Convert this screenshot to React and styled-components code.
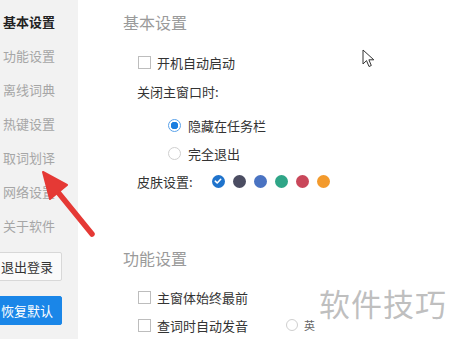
import React from "react";
import styled, { createGlobalStyle } from "styled-components";

const Global = createGlobalStyle`
  html, body {
    margin: 0;
    padding: 0;
    background: #ffffff;
    font-family: "Noto Sans CJK SC", "Noto Sans", sans-serif;
    overflow: hidden;
  }
`;

const menu = ["基本设置", "功能设置", "离线词典", "热键设置", "取词划译", "网络设置", "关于软件"];
const skins = ["#1f73cc", "#4b4d62", "#4a73c2", "#2fa587", "#c9475a", "#f39a2c"];

const Page = () => {
  return (
    <Window>
      <Global />
      <Sidebar>
        <Menu>
          {menu.map((m, i) => (
            <MenuItem key={m} active={i === 0}>{m}</MenuItem>
          ))}
        </Menu>
        <SideButton>退出登录</SideButton>
        <SideButton primary>恢复默认</SideButton>
      </Sidebar>
      <Content>
        <Heading>基本设置</Heading>
        <Row height={28} top={14}>
          <Check />
          <Label>开机自动启动</Label>
        </Row>
        <Row height={30}>
          <Label>关闭主窗口时:</Label>
        </Row>
        <Row height={28} indent={31} top={5}>
          <Radio checked />
          <Label>隐藏在任务栏</Label>
        </Row>
        <Row height={28} indent={31}>
          <Radio />
          <Label>完全退出</Label>
        </Row>
        <Row height={28}>
          <Label>皮肤设置:</Label>
          <Swatches>
            {skins.map((c, i) => (
              <Swatch key={c} color={c}>
                {i === 0 && (
                  <svg width="8" height="8" viewBox="0 0 8 8">
                    <path d="M1.3 4.2 L3.2 6 L6.7 2.3" fill="none" stroke="#fff" strokeWidth="1.6" strokeLinecap="round" strokeLinejoin="round" />
                  </svg>
                )}
              </Swatch>
            ))}
          </Swatches>
        </Row>
        <Heading top={51}>功能设置</Heading>
        <Row height={28} top={13}>
          <Check />
          <Label>主窗体始终最前</Label>
        </Row>
        <Row height={28}>
          <Check />
          <Label>查词时自动发音</Label>
          <Sub>
            <Radio small />
            <SmallLabel>英</SmallLabel>
          </Sub>
        </Row>
      </Content>
      <Watermark>软件技巧</Watermark>
      <Cursor width="14" height="20" viewBox="0 0 14 20">
        <path d="M1 1 L1 15 L4.5 11.6 L7 17.5 L9.3 16.5 L6.9 10.8 L11.8 10.8 Z" fill="#fff" stroke="#333" strokeWidth="1" strokeLinejoin="round" />
      </Cursor>
      <Pointer width="70" height="80" viewBox="0 0 70 80">
        <path d="M52 71 L17 28" stroke="#e53935" strokeWidth="5.5" strokeLinecap="round" />
        <path d="M3 9 L27 22 L10 36 Z" fill="#e53935" stroke="#e53935" strokeWidth="2" strokeLinejoin="round" />
      </Pointer>
    </Window>
  );
};

const Window = styled.div`
  position: relative;
  display: flex;
  width: 450px;
  height: 339px;
  overflow: hidden;
`;

const Sidebar = styled.div`
  width: 78px;
  flex-shrink: 0;
  background: #f2f2f2;
  display: flex;
  flex-direction: column;
`;

const Menu = styled.div`
  display: flex;
  flex-direction: column;
  padding-top: 5px;
  margin-bottom: 9px;
`;

const MenuItem = styled.div`
  height: 34px;
  line-height: 34px;
  padding-left: 3px;
  font-size: 13px;
  white-space: nowrap;
  color: ${(p) => (p.active ? "#222" : "#a6a6a6")};
  font-weight: ${(p) => (p.active ? 700 : 400)};
`;

const SideButton = styled.div`
  box-sizing: border-box;
  width: 70px;
  height: 29px;
  margin-left: -8px;
  margin-bottom: 15px;
  padding-left: 8px;
  line-height: 27px;
  font-size: 13px;
  white-space: nowrap;
  border-radius: 2px;
  border: 1px solid ${(p) => (p.primary ? "#1a86e8" : "#d8d8d8")};
  background: ${(p) => (p.primary ? "#1a86e8" : "#fafafa")};
  color: ${(p) => (p.primary ? "#fff" : "#333")};
`;

const Content = styled.div`
  flex: 1;
  display: flex;
  flex-direction: column;
  padding: 10px 0 0 45px;
`;

const Heading = styled.div`
  font-size: 16px;
  line-height: 24px;
  height: 24px;
  color: #9a9a9a;
  margin-top: ${(p) => p.top || 0}px;
`;

const Row = styled.div`
  display: flex;
  align-items: center;
  flex-shrink: 0;
  height: ${(p) => p.height}px;
  margin-top: ${(p) => p.top || 0}px;
  padding-left: ${(p) => 14 + (p.indent || 0)}px;
`;

const Check = styled.span`
  box-sizing: border-box;
  width: 13px;
  height: 13px;
  margin-left: 1px;
  margin-right: 6px;
  border: 1px solid #bdbdbd;
  background: #fff;
`;

const Radio = styled.span`
  box-sizing: border-box;
  width: ${(p) => (p.small ? 12 : 13)}px;
  height: ${(p) => (p.small ? 12 : 13)}px;
  margin-right: ${(p) => (p.small ? 6 : 7)}px;
  border-radius: 50%;
  border: 1px solid ${(p) => (p.checked ? "#5aa2ea" : "#cfcfcf")};
  background: ${(p) => (p.checked ? "radial-gradient(circle, #1a7ee0 0 3.5px, #fff 4px)" : "#fff")};
`;

const Label = styled.span`
  font-size: 13px;
  color: #333;
  white-space: nowrap;
`;

const SmallLabel = styled.span`
  font-size: 11px;
  color: #666;
`;

const Sub = styled.span`
  display: flex;
  align-items: center;
  margin-left: 38px;
`;

const Swatches = styled.div`
  display: flex;
  gap: 8px;
  margin-left: 19px;
`;

const Swatch = styled.span`
  display: flex;
  align-items: center;
  justify-content: center;
  width: 13px;
  height: 13px;
  border-radius: 50%;
  background: ${(p) => p.color};
`;

const Watermark = styled.div`
  position: absolute;
  left: 319px;
  top: 280px;
  font-size: 31px;
  letter-spacing: 1px;
  color: rgba(170, 170, 170, 0.75);
  white-space: nowrap;
`;

const Cursor = styled.svg`
  position: absolute;
  left: 362px;
  top: 49px;
`;

const Pointer = styled.svg`
  position: absolute;
  left: 40px;
  top: 163px;
`;

export default Page;
